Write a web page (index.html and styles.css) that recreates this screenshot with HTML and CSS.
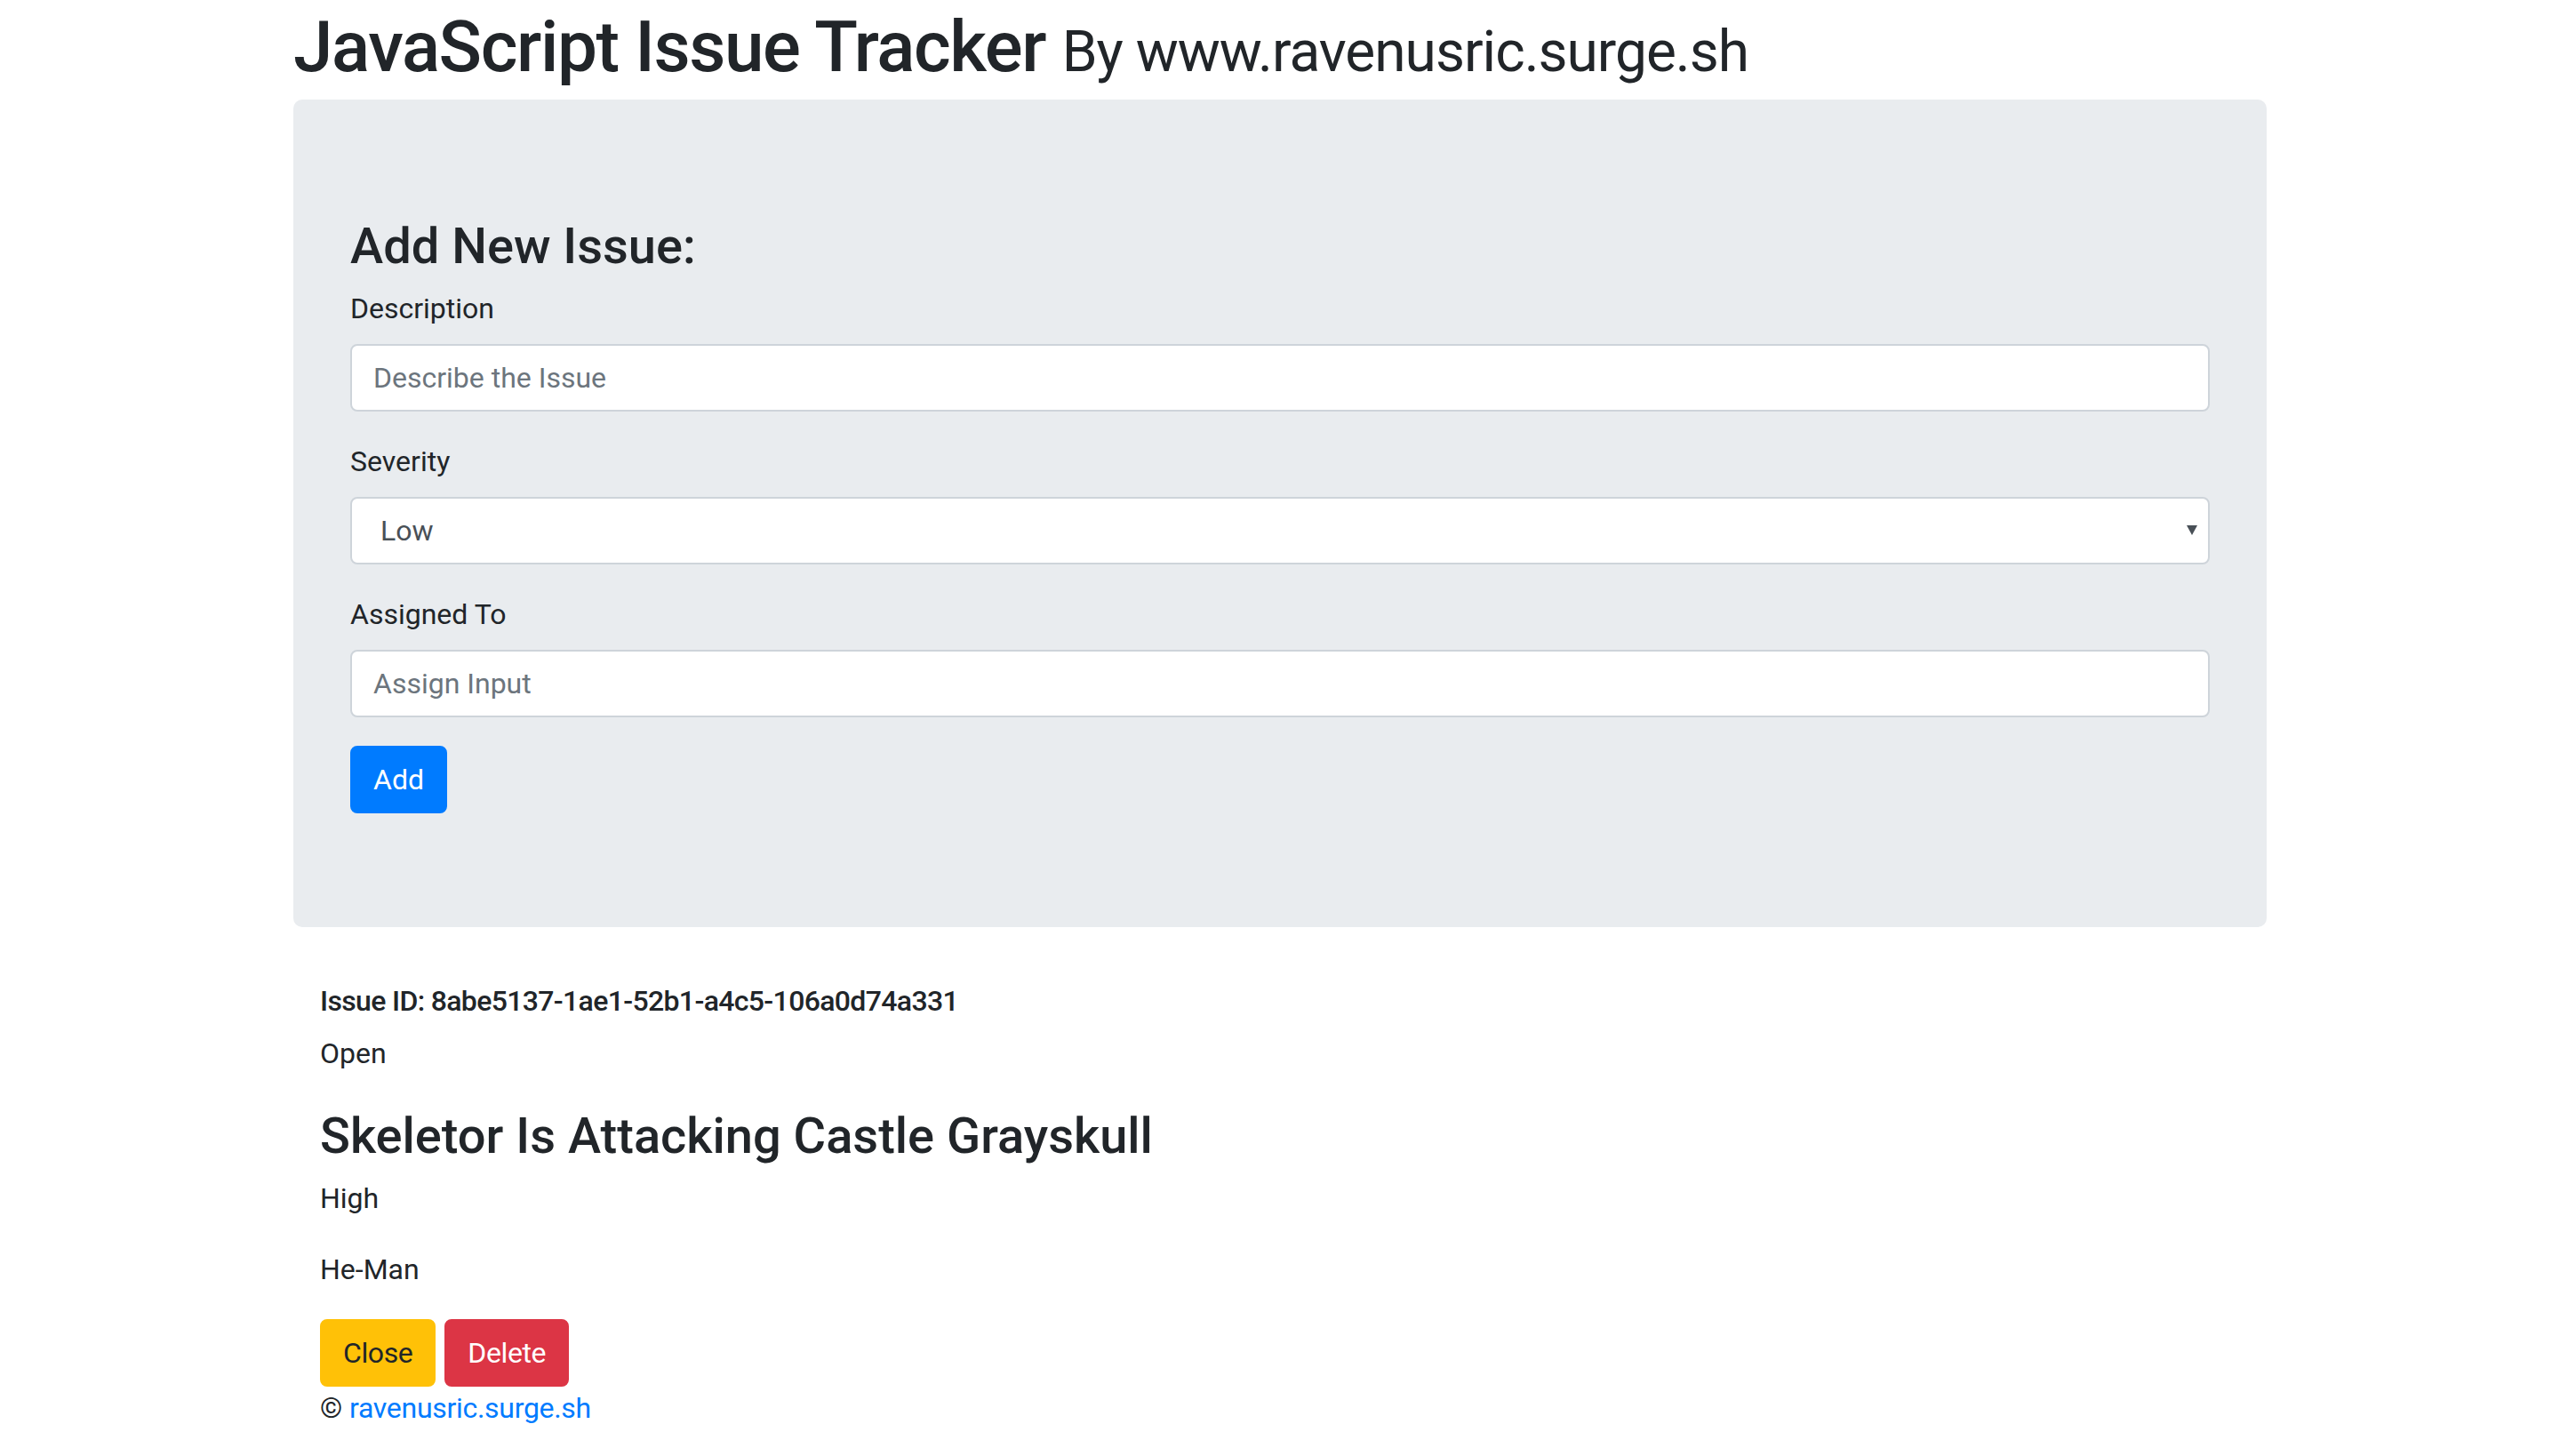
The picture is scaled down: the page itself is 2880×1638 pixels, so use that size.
FILE: index.html
```html
<!DOCTYPE html>
<html lang="en">
<head>
<meta charset="utf-8">
<title>JavaScript Issue Tracker</title>
<link rel="stylesheet" href="styles.css">
</head>
<body>
<div class="container">
  <h1 class="title">JavaScript Issue Tracker <small class="by">By www.ravenusric.surge.sh</small></h1>
  <div class="jumbotron">
    <h3 class="heading">Add New Issue:</h3>
    <form class="issue-form">
      <div class="form-group">
        <label class="label" for="desc">Description</label>
        <input class="form-control" id="desc" type="text" placeholder="Describe the Issue">
      </div>
      <div class="form-group">
        <label class="label" for="sev">Severity</label>
        <div class="select-wrap">
          <select class="form-control select" id="sev">
            <option>Low</option>
            <option>Medium</option>
            <option>High</option>
          </select>
        </div>
      </div>
      <div class="form-group">
        <label class="label" for="assign">Assigned To</label>
        <input class="form-control" id="assign" type="text" placeholder="Assign Input">
      </div>
      <button type="button" class="btn btn-primary">Add</button>
    </form>
  </div>
  <div class="issues">
    <div class="issue">
      <h6 class="issue-id">Issue ID: 8abe5137-1ae1-52b1-a4c5-106a0d74a331</h6>
      <p class="para">Open</p>
      <h3 class="heading">Skeletor Is Attacking Castle Grayskull</h3>
      <p class="para">High</p>
      <p class="para">He-Man</p>
      <div class="actions">
        <a href="#" class="btn btn-warning">Close</a>
        <a href="#" class="btn btn-danger">Delete</a>
      </div>
      <div class="footer">© <a href="#" class="link">ravenusric.surge.sh</a></div>
    </div>
  </div>
</div>
</body>
</html>
```
FILE: styles.css
```css
html, body {
  margin: 0;
  padding: 0;
}
body {
  font-family: Roboto, "Open Sans", Arial, sans-serif;
  font-size: 32px;
  line-height: 48px;
  color: #212529;
  background: #fff;
}
.container {
  width: 2220px;
  margin: 0 auto;
  padding: 0 30px;
}
.title {
  box-sizing: border-box;
  margin: 0 0 16px;
  height: 96px;
  padding-top: 10px;
  font-size: 80px;
  font-weight: 500;
  line-height: 86px;
  letter-spacing: -1.4px;
}
.by {
  font-size: 64px;
  font-weight: 400;
  line-height: 1;
  letter-spacing: -1px;
}
.jumbotron {
  background: #e9ecef;
  border-radius: 10px;
  padding: 128px 64px;
  margin-bottom: 64px;
}
.heading {
  margin: 0 0 16px;
  padding-top: 8px;
  font-size: 56px;
  font-weight: 500;
  line-height: 59px;
}
.issue-form {
  display: block;
}
.form-group {
  margin-bottom: 32px;
}
.label {
  display: inline-block;
  margin-bottom: 16px;
}
.form-control {
  display: block;
  box-sizing: border-box;
  width: 100%;
  height: 76px;
  padding: 12px 24px;
  font-family: inherit;
  font-size: 32px;
  line-height: 48px;
  color: #495057;
  background: #fff;
  border: 2px solid #ced4da;
  border-radius: 8px;
  outline: none;
}
.form-control::placeholder {
  color: #6c757d;
  opacity: 1;
}
.select-wrap {
  position: relative;
}
.select {
  appearance: none;
  -webkit-appearance: none;
  padding-left: 32px;
}
.select-wrap::after {
  content: "";
  position: absolute;
  right: 14px;
  top: 32px;
  border-left: 6px solid transparent;
  border-right: 6px solid transparent;
  border-top: 11px solid #495057;
  pointer-events: none;
}
.btn {
  display: inline-block;
  box-sizing: border-box;
  height: 76px;
  padding: 12px 24px;
  font-family: inherit;
  font-size: 32px;
  line-height: 48px;
  font-weight: 400;
  border: 2px solid transparent;
  border-radius: 8px;
  text-decoration: none;
  cursor: pointer;
}
.btn-primary {
  color: #fff;
  background: #007bff;
  border-color: #007bff;
}
.btn-warning {
  color: #212529;
  background: #ffc107;
  border-color: #ffc107;
}
.btn-danger {
  color: #fff;
  background: #dc3545;
  border-color: #dc3545;
}
.issues {
  padding: 0 30px;
}
.issue-id {
  margin: 0 0 16px;
  font-size: 32px;
  font-weight: 500;
  line-height: 38px;
  letter-spacing: -0.65px;
}
.para {
  margin: 0 0 32px;
}
.actions {
  display: flex;
  gap: 10px;
}
.actions .btn {
  letter-spacing: -0.4px;
}
.footer {
  line-height: 48px;
}
.link {
  color: #007bff;
  text-decoration: none;
  letter-spacing: -0.3px;
}
```
